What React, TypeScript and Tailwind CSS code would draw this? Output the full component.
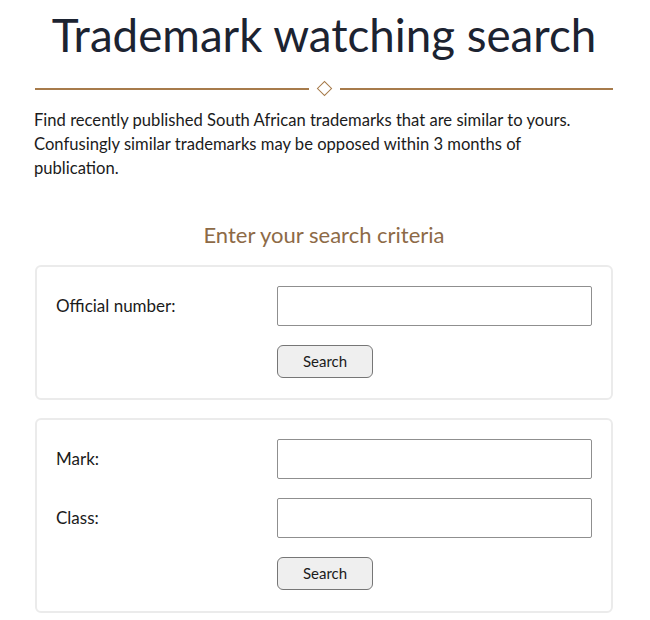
import React from 'react'

const font = { fontFamily: 'Lato, "Open Sans", sans-serif' }

function Field({ label }: { label: string }) {
  return (
    <div className="flex items-center">
      <label className="w-[222px] text-[17px] text-[#1b1b1b]">{label}</label>
      <input type="text" className="h-[40px] w-[316px] rounded-[2px] border border-[#8f8f8f] bg-white" />
    </div>
  )
}

function SearchButton() {
  return (
    <div className="pl-[221px]">
      <button className="h-[33px] w-[96px] rounded-[6px] border border-[#767676] bg-[#efefef] text-[15px] text-[#1b1b1b]">
        Search
      </button>
    </div>
  )
}

export default function App() {
  return (
    <div className="w-[650px] bg-white pl-[35px] pr-[37px]" style={font}>
      <h1 className="pt-[5px] text-center text-[45.7px] leading-[60px] text-[#1c2331]">Trademark watching search</h1>

      {/* divider with diamond */}
      <div className="mt-[18px] flex items-center">
        <div className="h-[2px] flex-1 bg-[#a77b4b]" />
        <div className="mx-[10px] h-[11px] w-[11px] rotate-45 border-[1.5px] border-[#a77b4b]" />
        <div className="h-[2px] flex-1 bg-[#a77b4b]" />
      </div>

      <p className="mt-[14px] -ml-[1px] text-[16.6px] leading-[24px] text-[#1b1b1b]">
        Find recently published South African trademarks that are similar to yours.
        <br />
        Confusingly similar trademarks may be opposed within 3 months of
        <br />
        publication.
      </p>

      <h2 className="mt-[41px] text-center text-[22px] leading-[28px] text-[#8d6a46]">Enter your search criteria</h2>

      <div className="mt-[16px] flex flex-col gap-[19px] rounded-[6px] border-2 border-[#ebebeb] px-[19px] pt-[19px] pb-[20px]">
        <Field label="Official number:" />
        <SearchButton />
      </div>

      <div className="mt-[18px] flex flex-col gap-[19px] rounded-[6px] border-2 border-[#ebebeb] px-[19px] pt-[19px] pb-[21px]">
        <Field label="Mark:" />
        <Field label="Class:" />
        <SearchButton />
      </div>
    </div>
  )
}
